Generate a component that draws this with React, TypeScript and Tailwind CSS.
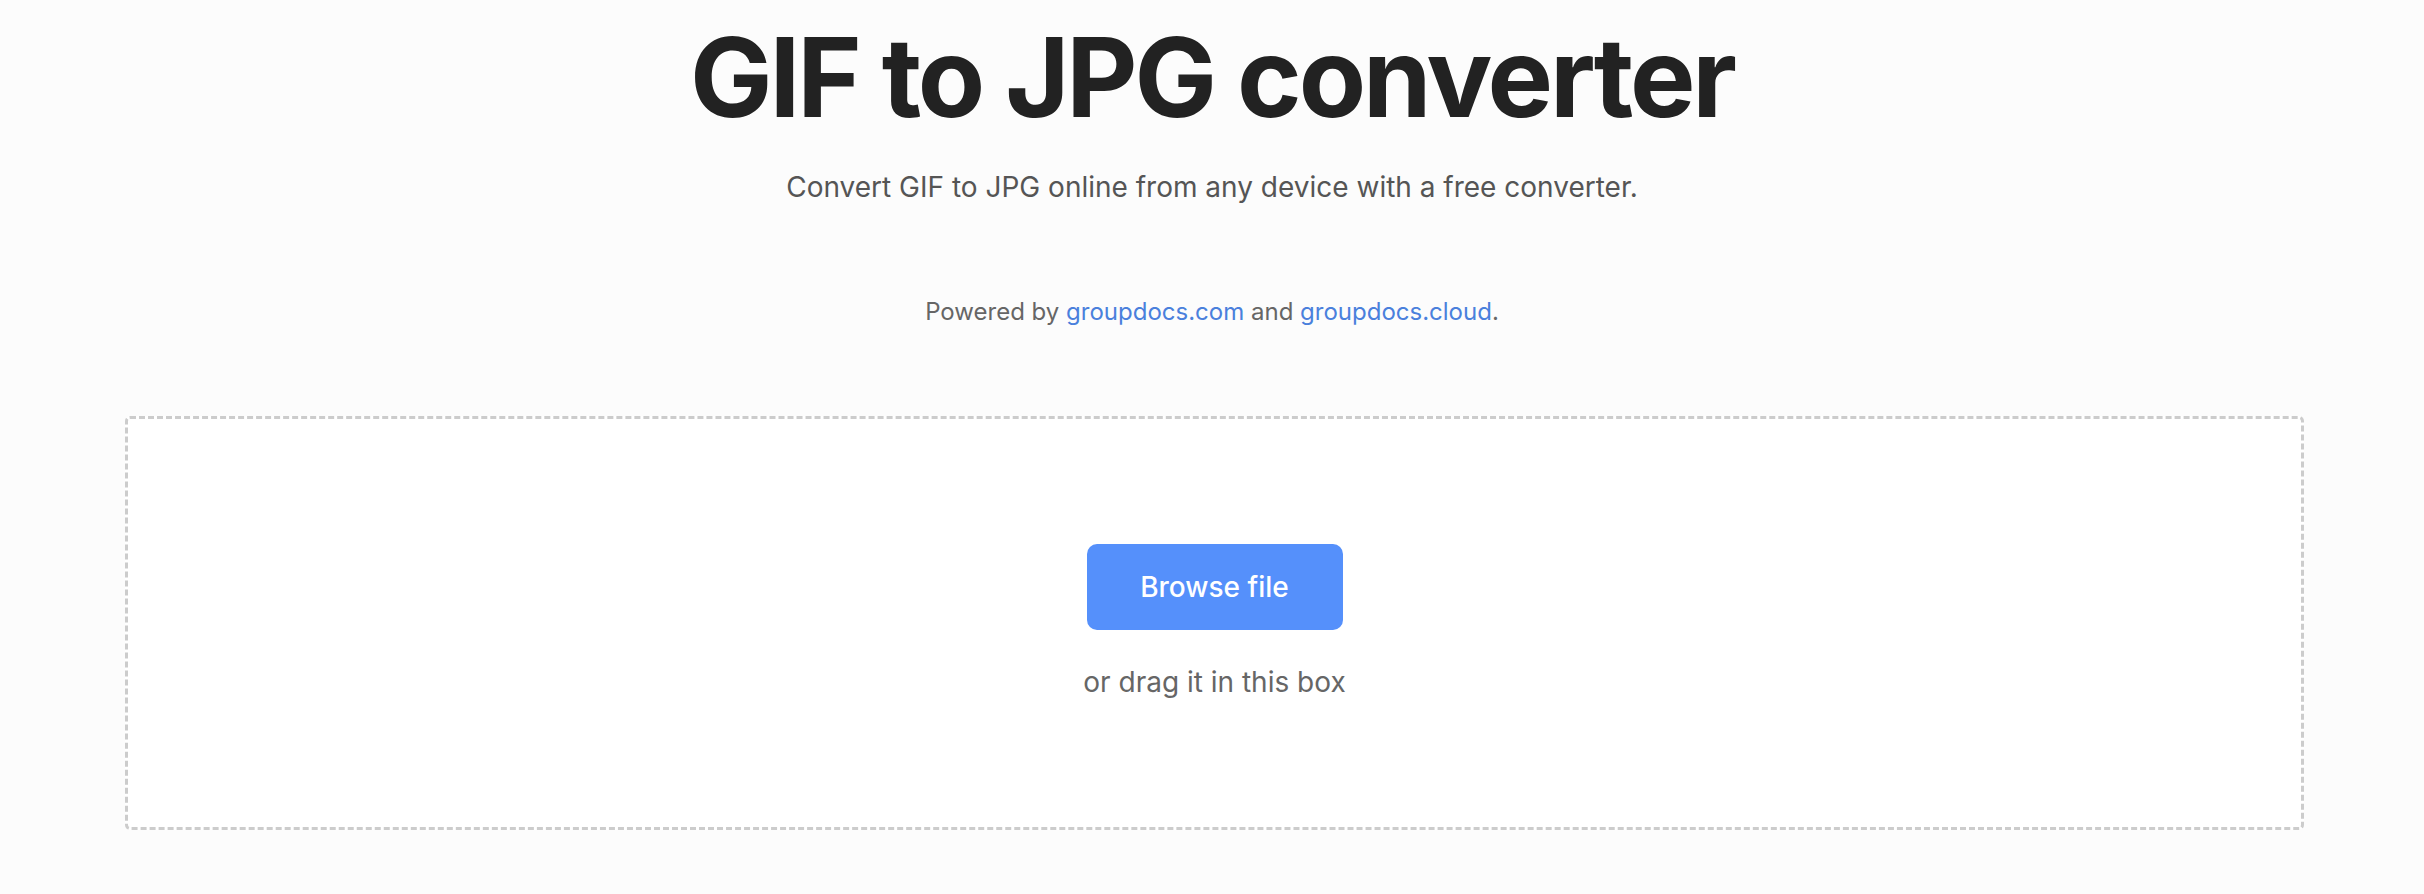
export default function App() {
  return (
    <div
      className="min-h-screen bg-[#fcfcfc] pb-16"
      style={{ fontFamily: 'Inter, "Noto Sans", sans-serif' }}
    >
      {/* Heading */}
      <div className="flex flex-col items-center pt-[11px] text-center">
        <h1 className="text-[110px] font-bold leading-[1.2] tracking-[-0.028em] text-[#222222]">
          GIF to JPG converter
        </h1>
        <p className="mt-[23px] text-[28px] leading-[1.5] text-[#555555]">
          Convert GIF to JPG online from any device with a free converter.
        </p>
        <p className="mt-[86px] text-[24px] leading-[1.5] text-[#666666]">
          Powered by{' '}
          <a href="#" className="text-[#4a80dc]">groupdocs.com</a> and{' '}
          <a href="#" className="text-[#4a80dc]">groupdocs.cloud</a>.
        </p>
      </div>

      {/* Drop zone */}
      <div className="ml-[125px] mr-[120px] mt-[86px] flex h-[414px] flex-col items-center justify-center rounded-[5px] border-[3px] border-dashed border-[#cccccc] bg-white">
        <button className="h-[86px] w-[256px] rounded-[10px] bg-[#5590fb] text-[28px] font-medium text-white">
          Browse file
        </button>
        <p className="mt-[31px] text-[28px] leading-[1.5] text-[#666666]">or drag it in this box</p>
      </div>
    </div>
  );
}
